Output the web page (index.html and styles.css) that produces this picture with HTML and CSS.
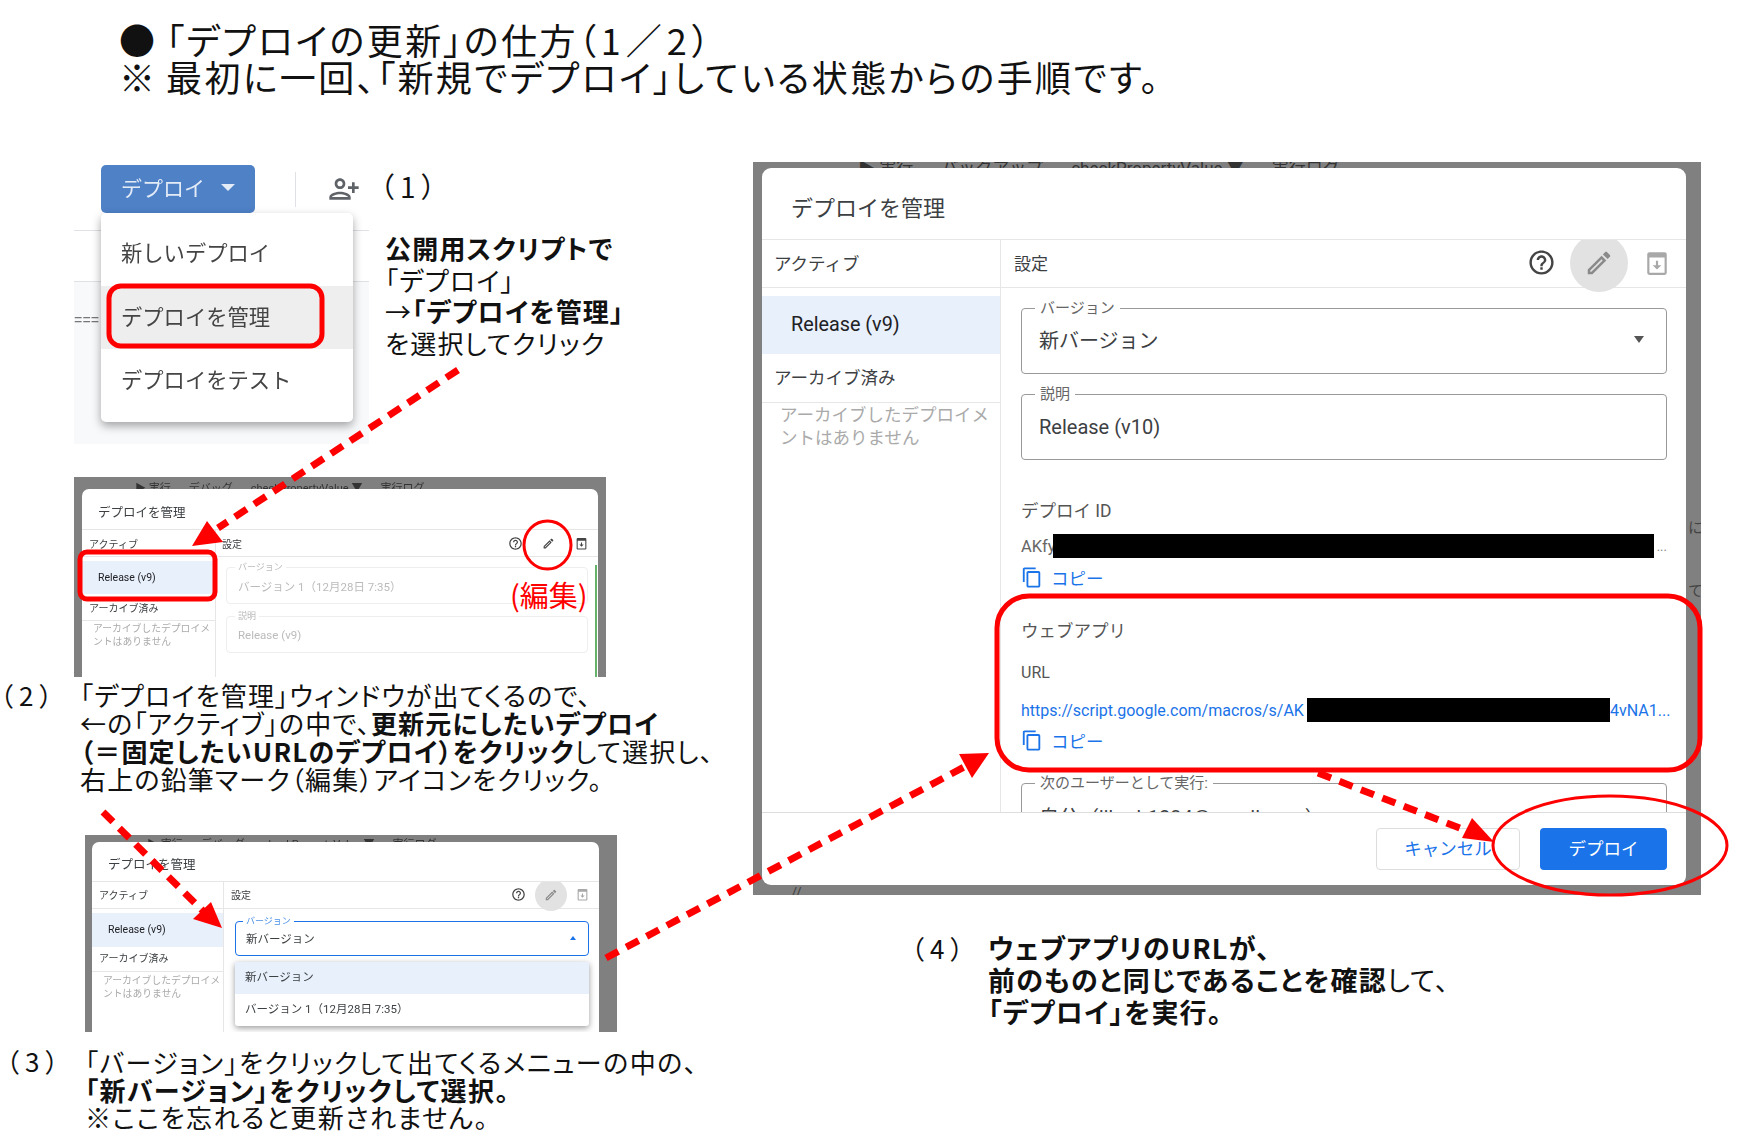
FILE: index.html
```html
<!DOCTYPE html>
<html lang="ja">
<head>
    <meta charset="UTF-8">
    <meta name="viewport" content="width=device-width, initial-scale=1.0">
    <title>デプロイの更新の仕方</title>
    <link rel="stylesheet" href="styles.css">
</head>
<body>
    <svg class="sprite" width="0" height="0">
        <symbol id="i-help" viewBox="0 0 24 24"><path d="M11 18h2v-2h-2v2zm1-16C6.48 2 2 6.48 2 12s4.48 10 10 10 10-4.48 10-10S17.52 2 12 2zm0 18c-4.41 0-8-3.59-8-8s3.59-8 8-8 8 3.59 8 8-3.59 8-8 8zm0-14c-2.21 0-4 1.79-4 4h2c0-1.1.9-2 2-2s2 .9 2 2c0 2-3 1.75-3 5h2c0-2.25 3-2.5 3-5 0-2.21-1.79-4-4-4z"/></symbol>
        <symbol id="i-edit" viewBox="0 0 24 24"><path d="M14.06 9.02l.92.92L5.92 19H5v-.92l9.06-9.06M17.66 3c-.25 0-.51.1-.7.29l-1.83 1.83 3.75 3.75 1.83-1.83c.39-.39.39-1.02 0-1.41l-2.34-2.34c-.2-.2-.45-.29-.71-.29zm-3.6 3.19L3 17.25V21h3.75L17.81 9.94l-3.75-3.75z"/></symbol>
        <symbol id="i-copy" viewBox="0 0 24 24"><path d="M16 1H4c-1.1 0-2 .9-2 2v14h2V3h12V1zm3 4H8c-1.1 0-2 .9-2 2v14c0 1.1.9 2 2 2h11c1.1 0 2-.9 2-2V7c0-1.1-.9-2-2-2zm0 16H8V7h11v14z"/></symbol>
        <symbol id="i-archive" viewBox="0 0 24 24"><path d="M5 2h14a2 2 0 0 1 2 2v17a2 2 0 0 1-2 2H5a2 2 0 0 1-2-2V4a2 2 0 0 1 2-2zm0 5v14h14V7H5zm6 3h2v4h3l-4 4-4-4h3v-4z"/></symbol>
        <symbol id="i-person" viewBox="0 0 24 24"><path d="M15 12c2.21 0 4-1.79 4-4s-1.79-4-4-4-4 1.79-4 4 1.79 4 4 4zm0-6c1.1 0 2 .9 2 2s-.9 2-2 2-2-.9-2-2 .9-2 2-2zm0 8c-2.67 0-8 1.34-8 4v2h16v-2c0-2.66-5.33-4-8-4zm-6 4c.22-.72 3.31-2 6-2 2.7 0 5.8 1.29 6 2H9zm-3-3v-3h3v-2H6V7H4v3H1v2h3v3h2z"/></symbol>
    </svg>

    <div class="slide">
        <header class="heading">
            <div><span class="mark">●</span>「デプロイの更新」の仕方<span class="page-no">（1／2）</span></div>
            <div><span class="mark">※</span>最初に一回、「新規でデプロイ」している状態からの手順です。</div>
        </header>

        <!-- step 1: deploy menu -->
        <div class="shot-menu">
            <div class="menu-top"></div>
            <div class="menu-mid"></div>
            <div class="menu-low"><span class="menu-rule">===</span></div>
            <div class="deploy-btn"><span>デプロイ</span><span class="caret-down"></span></div>
            <div class="deploy-sep"></div>
            <svg class="person-icon"><use href="#i-person"/></svg>
            <div class="deploy-menu">
                <div class="menu-item">新しいデプロイ</div>
                <div class="menu-item is-hover">デプロイを管理</div>
                <div class="menu-item">デプロイをテスト</div>
            </div>
        </div>
        <div class="step-no no-1">（1）</div>
        <div class="note note-1">
            <div><b>公開用スクリプトで</b></div>
            <div>「デプロイ」</div>
            <div>→<b>「デプロイを管理」</b></div>
            <div>を選択してクリック</div>
        </div>

        <!-- step 2: manage dialog, release selected -->
        <div class="shot shot-small shot-a">
            <div class="toolbar"><span>▶ 実行</span><span>デバッグ</span><span>checkPropertyValue ▼</span><span>実行ログ</span></div>
            <div class="dialog">
                <div class="dlg-title">デプロイを管理</div>
                <div class="dlg-body">
                    <div class="side">
                        <div class="side-head">アクティブ</div>
                        <div class="side-item">Release (v9)</div>
                        <div class="side-sub">アーカイブ済み</div>
                        <div class="side-note">アーカイブしたデプロイメントはありません</div>
                    </div>
                    <div class="main">
                        <div class="main-head">
                            <span>設定</span>
                            <div class="tools">
                                <span class="tool"><svg class="ico-help"><use href="#i-help"/></svg></span>
                                <span class="tool"><svg class="ico-edit"><use href="#i-edit"/></svg></span>
                                <span class="tool"><svg class="ico-arch"><use href="#i-archive"/></svg></span>
                            </div>
                        </div>
                        <div class="field is-off first"><label>バージョン</label><span>バージョン 1（12月28日 7:35）</span></div>
                        <div class="field is-off second"><label>説明</label><span>Release (v9)</span></div>
                    </div>
                </div>
            </div>
            <div class="scroll-mark"></div>
        </div>
        <div class="edit-label">(編集)</div>
        <div class="step-no no-2">（2）</div>
        <div class="note note-2">
            <div>「デプロイを管理」ウィンドウが出てくるので、</div>
            <div>←の「アクティブ」の中で、<b>更新元にしたいデプロイ</b></div>
            <div><b>（＝固定したいURLのデプロイ）をクリック</b>して選択し、</div>
            <div>右上の鉛筆マーク（編集）アイコンをクリック。</div>
        </div>

        <!-- step 3: version dropdown -->
        <div class="shot shot-small shot-b">
            <div class="toolbar"><span>▶ 実行</span><span>デバッグ</span><span>checkPropertyValue ▼</span><span>実行ログ</span></div>
            <div class="dialog">
                <div class="dlg-title">デプロイを管理</div>
                <div class="dlg-body">
                    <div class="side">
                        <div class="side-head">アクティブ</div>
                        <div class="side-item">Release (v9)</div>
                        <div class="side-sub">アーカイブ済み</div>
                        <div class="side-note">アーカイブしたデプロイメントはありません</div>
                    </div>
                    <div class="main">
                        <div class="main-head">
                            <span>設定</span>
                            <div class="tools">
                                <span class="tool"><svg class="ico-help"><use href="#i-help"/></svg></span>
                                <span class="tool is-on"><svg class="ico-edit"><use href="#i-edit"/></svg></span>
                                <span class="tool is-dim"><svg class="ico-arch"><use href="#i-archive"/></svg></span>
                            </div>
                        </div>
                        <div class="field is-focus first"><label>バージョン</label><span>新バージョン</span><i class="caret-up"></i></div>
                        <div class="dropdown">
                            <div class="drop-item is-sel">新バージョン</div>
                            <div class="drop-item">バージョン 1（12月28日 7:35）</div>
                        </div>
                    </div>
                </div>
            </div>
        </div>
        <div class="step-no no-3">（3）</div>
        <div class="note note-3">
            <div>「バージョン」をクリックして出てくるメニューの中の、</div>
            <div><b>「新バージョン」をクリックして選択。</b></div>
            <div>※ここを忘れると更新されません。</div>
        </div>

        <!-- step 4: large dialog -->
        <div class="shot shot-c">
            <div class="toolbar"><span>▶ 実行</span><span>バックアップ</span><span>checkPropertyValue ▼</span><span>実行ログ</span></div>
            <div class="dialog">
                <div class="dlg-title">デプロイを管理</div>
                <div class="dlg-body">
                    <div class="side">
                        <div class="side-head">アクティブ</div>
                        <div class="side-item">Release (v9)</div>
                        <div class="side-sub">アーカイブ済み</div>
                        <div class="side-note">アーカイブしたデプロイメントはありません</div>
                    </div>
                    <div class="main">
                        <div class="main-head">
                            <span>設定</span>
                            <div class="tools">
                                <span class="tool"><svg class="ico-help"><use href="#i-help"/></svg></span>
                                <span class="tool is-on"><svg class="ico-edit"><use href="#i-edit"/></svg></span>
                                <span class="tool is-dim"><svg class="ico-arch"><use href="#i-archive"/></svg></span>
                            </div>
                        </div>
                        <div class="field is-line first"><label>バージョン</label><span>新バージョン</span><i class="caret-down dark"></i></div>
                        <div class="field is-line second"><label>説明</label><span>Release (v10)</span></div>
                        <div class="info id-label">デプロイ ID</div>
                        <div class="secret"><span class="lead">AKfy</span><span class="redact bar-id"></span><span class="more">...</span></div>
                        <a class="copy copy-id"><svg><use href="#i-copy"/></svg>コピー</a>
                        <div class="info app-label">ウェブアプリ</div>
                        <div class="info url-label">URL</div>
                        <div class="secret link"><span class="lead">https://script.google.com/macros/s/AK</span><span class="redact bar-url"></span><span>4vNA1...</span></div>
                        <a class="copy copy-url"><svg><use href="#i-copy"/></svg>コピー</a>
                        <div class="field is-line third"><label>次のユーザーとして実行:</label><span>自分（jjkurb1234@gmail.com）</span></div>
                    </div>
                </div>
                <div class="dlg-foot">
                    <button class="btn-cancel">キャンセル</button>
                    <button class="btn-deploy">デプロイ</button>
                </div>
            </div>
            <span class="stray stray-1">に</span>
            <span class="stray stray-2">て</span>
            <span class="stray stray-3">//</span>
        </div>
        <div class="step-no no-4">（4）</div>
        <div class="note note-4">
            <div><b>ウェブアプリのURLが、</b></div>
            <div><b>前のものと同じであることを確認</b>して、</div>
            <div><b>「デプロイ」を実行。</b></div>
        </div>

        <!-- red marks drawn over the screenshots -->
        <svg class="marks" width="1740" height="1147" viewBox="0 0 1740 1147">
            <g class="outline">
                <rect x="109" y="286" width="213" height="60" rx="12"/>
                <rect x="80" y="552" width="135" height="47" rx="7"/>
                <rect x="997" y="596" width="703" height="174" rx="32"/>
            </g>
            <g class="ring">
                <ellipse cx="547.5" cy="545" rx="23.5" ry="24"/>
                <ellipse cx="1610" cy="845.5" rx="117" ry="49.5"/>
            </g>
            <g class="dash">
                <line x1="458" y1="370" x2="218" y2="528"/>
                <line x1="103" y1="812" x2="206" y2="914"/>
                <line x1="606" y1="958" x2="966" y2="766"/>
                <line x1="1318" y1="773" x2="1470" y2="832"/>
            </g>
            <g class="head">
                <polygon points="192,546 207,521 223,542"/>
                <polygon points="222,928 193,919 211,902"/>
                <polygon points="989,753 959,754 972,778"/>
                <polygon points="1494,842 1472,818 1462,838"/>
            </g>
        </svg>
    </div>
</body>
</html>
```
FILE: styles.css
```css
html, body {
    margin: 0;
    background: #fff;
}
.sprite {
    position: absolute;
}
svg {
    fill: currentColor;
}
.slide {
    position: relative;
    width: 1740px;
    height: 1147px;
    overflow: hidden;
    font-family: "Noto Sans CJK JP", sans-serif;
    color: #111;
}
b {
    font-weight: 700;
}

/* captions */
.heading {
    position: absolute;
    left: 119px;
    top: 21px;
    font-size: 36px;
    line-height: 37px;
    letter-spacing: 2.4px;
    font-feature-settings: "palt";
    white-space: nowrap;
}
.heading .mark {
    display: inline-block;
    width: 47px;
}
.page-no {
    letter-spacing: 5px;
}
.note, .step-no {
    position: absolute;
    white-space: nowrap;
    font-feature-settings: "palt";
}
.step-no {
    font-size: 26px;
    line-height: 30px;
    letter-spacing: 6px;
}
.no-1 { left: 380px; top: 171px; font-size: 28px; }
.no-2 { left: 0; top: 680px; }
.no-3 { left: 6px; top: 1046px; }
.no-4 { left: 911px; top: 933px; }
.note-1 { left: 385px; top: 232px; font-size: 26px; line-height: 31.5px; letter-spacing: 1.2px; }
.note-2 { left: 80px; top: 681px; font-size: 26px; line-height: 28px; letter-spacing: 1.2px; }
.note-3 { left: 85px; top: 1048px; font-size: 26px; line-height: 27.5px; letter-spacing: 1.5px; }
.note-4 { left: 988px; top: 932px; font-size: 27px; line-height: 32px; letter-spacing: 1.2px; }
.edit-label {
    position: absolute;
    left: 510px;
    top: 575px;
    color: #f00;
    font-size: 29px;
    line-height: 38px;
    white-space: nowrap;
}

/* step 1 */
.shot-menu {
    position: absolute;
    left: 74px;
    top: 165px;
    width: 295px;
    height: 279px;
    display: flex;
    flex-direction: column;
    font-family: Roboto, "Noto Sans CJK JP", sans-serif;
    filter: blur(.3px);
}
.menu-top {
    height: 65px;
    border-bottom: 1px solid #dfe1e5;
}
.menu-mid {
    height: 50px;
    border-bottom: 1px solid #dfe1e5;
}
.menu-low {
    flex: 1;
    background: #f8f9fb;
}
.menu-rule {
    display: block;
    margin-top: 29px;
    color: #777;
    font: 14px/20px "Liberation Mono", monospace;
}
.deploy-btn {
    position: absolute;
    left: 27px;
    top: 0;
    width: 154px;
    height: 48px;
    box-sizing: border-box;
    padding: 0 20px 4px;
    display: flex;
    align-items: center;
    justify-content: space-between;
    background: #4f81c7;
    border-radius: 5px;
    color: #e3ebf7;
    font-size: 21px;
}
.caret-down {
    width: 0;
    height: 0;
    border-left: 7px solid transparent;
    border-right: 7px solid transparent;
    border-top: 7px solid #e3ebf7;
}
.deploy-sep {
    position: absolute;
    left: 221px;
    top: 7px;
    width: 1px;
    height: 35px;
    background: #dfe1e5;
}
.person-icon {
    position: absolute;
    left: 252px;
    top: 8px;
    width: 36px;
    height: 32px;
    color: #5f6368;
    transform: scaleX(-1);
}
.deploy-menu {
    position: absolute;
    left: 27px;
    top: 48px;
    width: 252px;
    height: 209px;
    box-sizing: border-box;
    padding-top: 9px;
    background: #fff;
    border-radius: 5px;
    box-shadow: 0 4px 10px rgba(0, 0, 0, .35);
}
.menu-item {
    height: 63.5px;
    box-sizing: border-box;
    padding: 0 0 4px 20px;
    display: flex;
    align-items: center;
    font-size: 21.3px;
    color: #444;
}
.menu-item.is-hover {
    background: #eee;
}

/* dialog shots */
.shot {
    position: absolute;
    overflow: hidden;
    background: #808080;
    font-family: Roboto, "Noto Sans CJK JP", sans-serif;
    color: #3c4043;
}
.shot-small {
    filter: blur(.35px);
}
.toolbar {
    position: absolute;
    top: 0;
    display: flex;
    white-space: nowrap;
    color: #333;
}
.dialog {
    position: relative;
    box-sizing: border-box;
    display: flex;
    flex-direction: column;
    background: #fff;
    border-radius: 7px 7px 0 0;
}
.dlg-title {
    flex: none;
    display: flex;
    align-items: center;
    border-bottom: 1px solid #e6e6e6;
    box-sizing: border-box;
}
.dlg-body {
    flex: 1;
    min-height: 0;
    display: grid;
    overflow: hidden;
}
.side {
    border-right: 1px solid #e6e6e6;
}
.side-head, .side-sub {
    display: flex;
    align-items: center;
    box-sizing: border-box;
    border-bottom: 1px solid #e6e6e6;
}
.side-item {
    display: flex;
    align-items: center;
    box-sizing: border-box;
    background: #e8f0fb;
    color: #202124;
}
.side-note {
    color: #aaa;
}
.main {
    min-width: 0;
}
.main-head {
    display: flex;
    align-items: center;
    justify-content: space-between;
    box-sizing: border-box;
    border-bottom: 1px solid #e6e6e6;
}
.tools {
    display: flex;
    align-items: center;
}
.tool {
    display: flex;
    align-items: center;
    justify-content: center;
    flex: none;
    color: #444;
}
.tool.is-on {
    background: #e2e2e2;
    border-radius: 50%;
    color: #8a8a8a;
}
.tool.is-dim {
    color: #a8a8a8;
}
.field {
    position: relative;
    box-sizing: border-box;
    display: flex;
    align-items: center;
    justify-content: space-between;
    border-radius: 4px;
    background: #fff;
}
.field label {
    position: absolute;
    background: #fff;
    white-space: nowrap;
}
.field.is-off {
    border: 1px solid #eee;
    color: #bbb;
}
.field.is-line {
    border: 1.5px solid #999;
}
.field.is-line label {
    color: #666;
}
.field.is-focus {
    border: 1.5px solid #1a73e8;
}
.field.is-focus label {
    color: #4a90e8;
}
.caret-up {
    width: 0;
    height: 0;
    border-left: 3.5px solid transparent;
    border-right: 3.5px solid transparent;
    border-bottom: 4px solid #1a73e8;
}
.caret-down.dark {
    border-left-width: 5px;
    border-right-width: 5px;
    border-top: 7px solid #555;
}

/* step 2 */
.shot-a {
    left: 74px;
    top: 477px;
    width: 532px;
    height: 200px;
}
.shot-a .toolbar { left: 61px; top: 2px; font-size: 11px; gap: 18px; }
.shot-a .dialog { margin: 12px 0 0 8px; width: 515.5px; height: 188px; }
.shot-a .dlg-title { height: 41px; padding: 4px 0 0 16px; font-size: 12.5px; }
.shot-a .dlg-body { grid-template-columns: 134px 1fr; }
.shot-a .side-head { height: 27px; padding-left: 7px; font-size: 10px; }
.shot-a .side-item { margin-top: 4px; height: 33px; padding-left: 16px; font-size: 10.5px; }
.shot-a .side-sub { height: 27px; padding-left: 7px; font-size: 10px; }
.shot-a .side-note { padding: 1px 0 0 11px; font-size: 9.8px; line-height: 13px; }
.shot-a .main-head { height: 27px; padding-left: 6px; font-size: 10px; }
.shot-a .tool { width: 33px; height: 27px; }
.shot-a .ico-help { width: 15px; height: 15px; }
.shot-a .ico-edit { width: 13px; height: 13px; }
.shot-a .ico-arch { width: 13px; height: 13px; }
.shot-a .field { margin: 10px 10px 0; height: 37px; padding-left: 11px; font-size: 11.5px; }
.shot-a .field.second { margin-top: 12px; }
.shot-a .field label { left: 8px; top: -6px; padding: 0 3px; font-size: 9px; line-height: 11px; }
.scroll-mark {
    position: absolute;
    left: 521px;
    top: 88px;
    width: 1.5px;
    height: 112px;
    background: #68b36b;
}

/* step 3 */
.shot-b {
    left: 85px;
    top: 835px;
    width: 532px;
    height: 197px;
}
.shot-b .toolbar { left: 62px; top: 0; font-size: 11px; gap: 18px; }
.shot-b .dialog { margin: 7px 0 0 7px; width: 506.5px; height: 190px; }
.shot-b .dlg-title { height: 40px; padding: 4px 0 0 16px; font-size: 12.5px; }
.shot-b .dlg-body { grid-template-columns: 132px 1fr; }
.shot-b .side-head { height: 27px; padding: 0 0 1px 7px; font-size: 10px; }
.shot-b .side-item { margin-top: 4px; height: 34px; padding: 0 0 2px 16px; font-size: 10.5px; }
.shot-b .side-sub { height: 25px; padding: 0 0 3px 7px; font-size: 10px; }
.shot-b .side-note { padding: 2px 0 0 11px; font-size: 9.8px; line-height: 13px; }
.shot-b .main-head { height: 27px; padding: 0 0 1px 7px; font-size: 10px; }
.shot-b .tool { width: 32px; height: 27px; }
.shot-b .tool.is-on { height: 32px; }
.shot-b .ico-help { width: 15px; height: 15px; }
.shot-b .ico-edit { width: 14px; height: 14px; }
.shot-b .ico-arch { width: 13px; height: 13px; }
.shot-b .field { margin: 12px 10px 0 11px; height: 35px; padding: 0 12px 2px 10px; font-size: 11.5px; }
.shot-b .field label { left: 7px; top: -6px; padding: 0 3px; font-size: 9px; line-height: 11px; }
.dropdown {
    margin: 6px 10px 0 11px;
    background: #fff;
    border-radius: 0 0 3px 3px;
    box-shadow: 0 2px 6px rgba(0, 0, 0, .4);
    font-size: 11.5px;
}
.drop-item {
    height: 32px;
    box-sizing: border-box;
    padding: 0 0 4px 10px;
    display: flex;
    align-items: center;
    white-space: nowrap;
}
.drop-item.is-sel {
    background: #e8f0fb;
}

/* step 4 */
.shot-c {
    left: 753px;
    top: 162px;
    width: 948px;
    height: 733px;
}
.shot-c .toolbar { left: 105px; top: -8px; font-size: 17px; gap: 28px; }
.shot-c .dialog { margin: 6px 0 0 9px; width: 924px; height: 717px; border-radius: 9px; }
.shot-c .dlg-title { height: 72px; padding: 4px 0 0 29px; font-size: 22px; }
.shot-c .dlg-body { grid-template-columns: 239px 1fr; }
.shot-c .side-head { height: 48px; padding: 0 0 2px 12px; font-size: 17.5px; }
.shot-c .side-item { margin-top: 8px; height: 58px; padding: 0 0 2px 29px; font-size: 19.8px; }
.shot-c .side-sub { height: 49px; padding: 0 0 3px 12px; font-size: 17.5px; }
.shot-c .side-note { padding: 1px 4px 0 18px; font-size: 17.5px; line-height: 23px; color: #aaa; }
.shot-c .main-head { height: 48px; padding: 0 0 2px 13px; font-size: 17px; }
.shot-c .tool { width: 58px; height: 48px; }
.shot-c .tool.is-on { height: 58px; }
.shot-c .ico-help { width: 29px; height: 29px; }
.shot-c .ico-edit { width: 30px; height: 30px; }
.shot-c .ico-arch { width: 26px; height: 28px; }
.shot-c .field { margin: 0 19px 0 20px; height: 66px; padding: 0 22px 0 17px; font-size: 20px; }
.shot-c .field.first { margin-top: 20px; padding-bottom: 3px; }
.shot-c .field.second { margin-top: 20px; }
.shot-c .field.third { margin-top: 33px; padding-right: 0; justify-content: flex-start; }
.shot-c .field label { left: 13px; top: -10px; padding: 0 5px; font-size: 15px; line-height: 18px; }
.info {
    margin-left: 20px;
    line-height: 24px;
    font-size: 17.5px;
    color: #555;
}
.id-label { margin-top: 39px; }
.app-label { margin-top: 32px; }
.url-label { margin-top: 18px; font-size: 16px; }
.secret {
    margin: 11px 19px 0 20px;
    height: 24px;
    display: flex;
    align-items: center;
    white-space: nowrap;
    font-size: 16.5px;
    color: #666;
}
.secret .lead {
    flex: none;
}
.secret .more {
    margin-left: 3px;
    font-size: 13px;
    color: #888;
}
.redact {
    flex: none;
    height: 24px;
    background: #000;
}
.bar-id { width: 601px; margin-left: -3px; }
.secret.link {
    margin-top: 13px;
    color: #1a73e8;
    font-size: 16px;
}
.secret.link .lead { width: 286px; overflow: hidden; }
.bar-url { width: 303px; }
.copy {
    margin-left: 20px;
    height: 20px;
    display: flex;
    align-items: center;
    gap: 8px;
    color: #1a73e8;
    font-size: 17.5px;
}
.copy svg {
    width: 22px;
    height: 25px;
    flex: none;
}
.copy-id { margin-top: 9px; }
.copy-url { margin-top: 8px; }
.dlg-foot {
    flex: none;
    height: 73px;
    box-sizing: border-box;
    border-top: 1px solid #ddd;
    display: flex;
    justify-content: flex-end;
    align-items: center;
    gap: 20px;
    padding-right: 19px;
}
.dlg-foot button {
    height: 42px;
    padding: 0 0 3px;
    border-radius: 4px;
    font-family: inherit;
    font-size: 17.5px;
}
.btn-cancel {
    width: 144px;
    background: #fff;
    border: 1px solid #ddd;
    color: #1a73e8;
}
.btn-deploy {
    width: 127px;
    background: #1a73e8;
    border: none;
    color: #fff;
}
.stray {
    position: absolute;
    color: #444;
    font-size: 15px;
    line-height: 18px;
}
.stray-1 { left: 935px; top: 357px; }
.stray-2 { left: 935px; top: 420px; }
.stray-3 { left: 38px; top: 722px; }

/* annotations */
.marks {
    position: absolute;
    left: 0;
    top: 0;
    pointer-events: none;
}
.outline rect {
    fill: none;
    stroke: #f00;
    stroke-width: 5;
}
.ring ellipse {
    fill: none;
    stroke: #f00;
    stroke-width: 3;
}
.dash line {
    stroke: #f00;
    stroke-width: 7;
    stroke-dasharray: 14 9;
}
.head polygon {
    fill: #f00;
}
```
